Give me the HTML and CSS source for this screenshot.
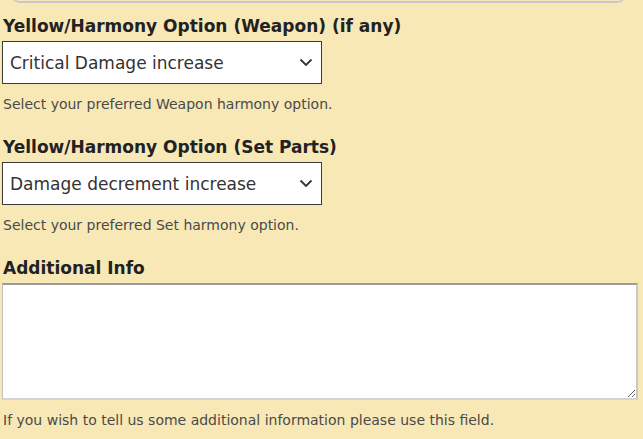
FILE: index.html
```html
<!DOCTYPE html>
<html>
<head>
<meta charset="utf-8">
<link rel="stylesheet" href="styles.css">
</head>
<body>
<div class="page">
  <div class="prev-box"></div>
  <div class="field first">
    <label class="label">Yellow/Harmony Option (Weapon) (if any)</label>
    <div class="select">
      <span>Critical Damage increase</span>
      <svg class="chev" width="14" height="9" viewBox="0 0 14 9"><path d="M1.5 1.5 L7 7 L12.5 1.5" fill="none" stroke="#333" stroke-width="1.8"/></svg>
    </div>
    <p class="help">Select your preferred Weapon harmony option.</p>
  </div>
  <div class="field">
    <label class="label">Yellow/Harmony Option (Set Parts)</label>
    <div class="select">
      <span>Damage decrement increase</span>
      <svg class="chev" width="14" height="9" viewBox="0 0 14 9"><path d="M1.5 1.5 L7 7 L12.5 1.5" fill="none" stroke="#333" stroke-width="1.8"/></svg>
    </div>
    <p class="help">Select your preferred Set harmony option.</p>
  </div>
  <div class="field">
    <label class="label">Additional Info</label>
    <textarea class="textarea"></textarea>
    <p class="help">If you wish to tell us some additional information please use this field.</p>
  </div>
</div>
</body>
</html>
```
FILE: styles.css
```css
html, body {
  margin: 0;
  padding: 0;
  background: #f8e8b6;
}
body {
  font-family: "DejaVu Sans", Tahoma, sans-serif;
  color: #222;
  width: 643px;
  height: 439px;
  overflow: hidden;
}
.page {
  padding: 0 6px 0 2px;
}
.prev-box {
  height: 19px;
  margin: -18px 10px 0 8px;
  border: 1px solid #c8c8cc;
  border-top: none;
  border-bottom-width: 2px;
  border-radius: 0 0 10px 10px;
}
.field {
  display: flex;
  flex-direction: column;
  align-items: flex-start;
}
.label {
  display: block;
  font-weight: bold;
  font-size: 17px;
  line-height: 20px;
  margin: 24px 0 5px 1px;
  color: #222;
}
.field.first .label { margin-top: 13px; }
.select {
  box-sizing: border-box;
  width: 320px;
  height: 43px;
  background: #fff;
  border: 1px solid #3a3a3a;
  display: flex;
  align-items: center;
  justify-content: space-between;
  padding: 0 7px 0 7px;
  font-size: 17px;
  color: #333;
}
.chev { margin-right: 1px; }
.help {
  margin: 11px 0 0 1px;
  font-size: 14px;
  line-height: 18px;
  color: #4a4a4a;
}
.textarea {
  box-sizing: border-box;
  width: 636px;
  height: 117px;
  background: #fff;
  border-style: solid;
  border-width: 2px 2px 2px 1px;
  border-color: #9a9a9a #c8c8c8 #d4d4d4 #c0c0c0;
  margin: 0;
  resize: both;
}
```
